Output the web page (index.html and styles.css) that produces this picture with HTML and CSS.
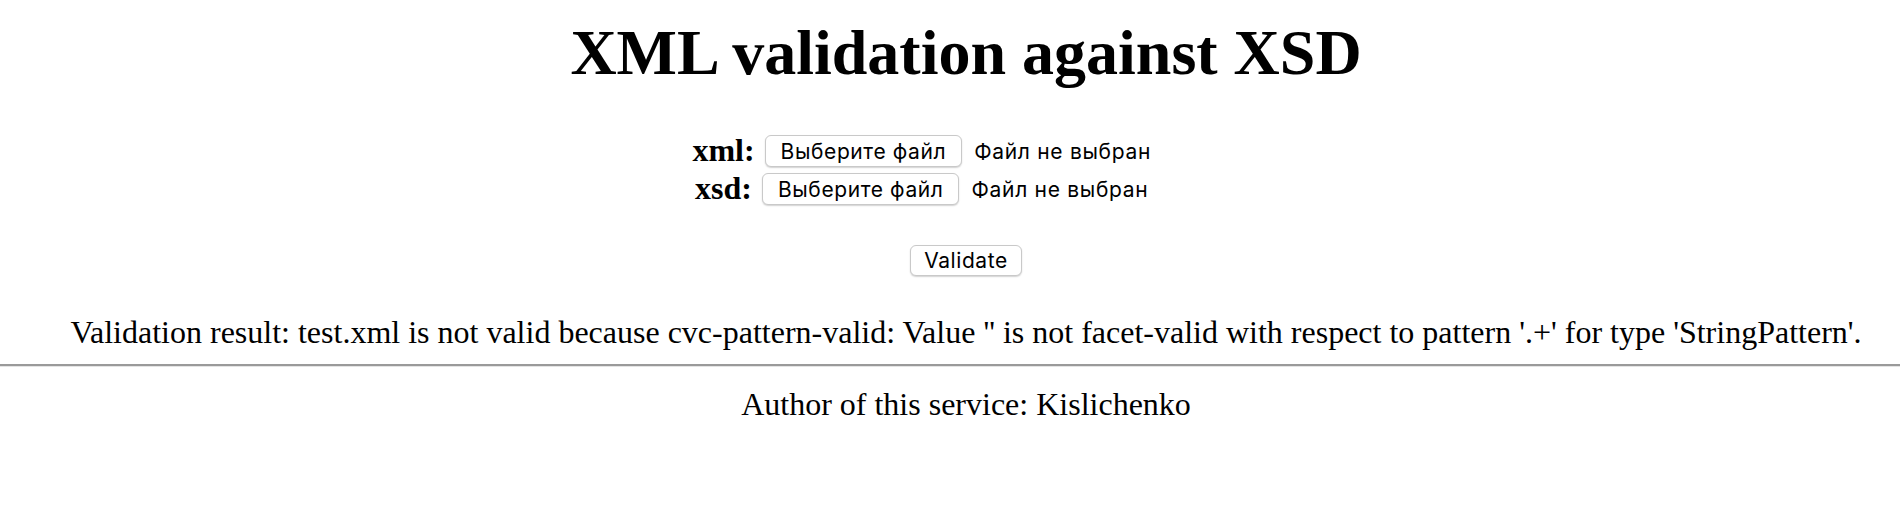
FILE: index.html
```html
<!DOCTYPE html>
<html lang="en">
<head>
<meta charset="utf-8">
<title>XML validation against XSD</title>
<link rel="stylesheet" href="styles.css">
</head>
<body>
<div class="page">
  <h1 class="title">XML validation against XSD</h1>
  <form class="form">
    <div class="file-row">
      <b class="file-label">xml:</b>
      <span class="file-input"><span class="btn">Выберите файл</span><span class="file-status">Файл не выбран</span></span>
    </div>
    <div class="file-row">
      <b class="file-label">xsd:</b>
      <span class="file-input"><span class="btn">Выберите файл</span><span class="file-status">Файл не выбран</span></span>
    </div>
    <div class="submit-row"><span class="btn btn-submit">Validate</span></div>
  </form>
  <p class="result">Validation result: test.xml is not valid because cvc-pattern-valid: Value '' is not facet-valid with respect to pattern '.+' for type 'StringPattern'.</p>
</div>
<hr class="rule">
<div class="page">
  <p class="author">Author of this service: Kislichenko</p>
</div>
</body>
</html>
```

FILE: styles.css
```css
html, body {
  margin: 0;
  padding: 0;
  background: #ffffff;
}
body {
  font-family: "Liberation Serif", "Times New Roman", serif;
  font-size: 32px;
  color: #000000;
}
.page {
  padding-left: 32px;
  text-align: center;
}
.title {
  margin: 16px 0 0;
  font-size: 64px;
  font-weight: bold;
  line-height: 74px;
}
.form {
  margin: 42px 0 0;
}
.file-row {
  display: flex;
  justify-content: center;
  align-items: center;
  height: 38px;
}
.file-label {
  font-weight: bold;
  line-height: 38px;
  margin-right: 10px;
  padding-bottom: 2px;
}
.file-input {
  display: flex;
  align-items: center;
  width: 475px;
}
.btn {
  display: inline-flex;
  align-items: center;
  justify-content: center;
  box-sizing: border-box;
  height: 32px;
  padding: 0 15px;
  font-family: Inter, "Liberation Sans", sans-serif;
  font-size: 21px;
  letter-spacing: 0.6px;
  color: #000;
  background: #ffffff;
  border: 1px solid #c9c9c9;
  border-radius: 6px;
  box-shadow: 0 1px 1.5px rgba(0, 0, 0, 0.18);
  white-space: nowrap;
}
.file-status {
  margin-left: 12px;
  font-family: Inter, "Liberation Sans", sans-serif;
  font-size: 21px;
  letter-spacing: 0.7px;
  white-space: nowrap;
}
.submit-row {
  margin-top: 37px;
  display: flex;
  justify-content: center;
}
.btn-submit {
  height: 31px;
  padding: 0 13px;
}
.result {
  margin: 38px 0 0;
  line-height: 37px;
}
.rule {
  margin: 13px 0 0;
  height: 0;
  border: 0;
  border-top: 2px solid #9a9a9a;
  border-bottom: 1px solid #e4e4e4;
}
.author {
  margin: 19px 0 0;
  line-height: 37px;
}
```
